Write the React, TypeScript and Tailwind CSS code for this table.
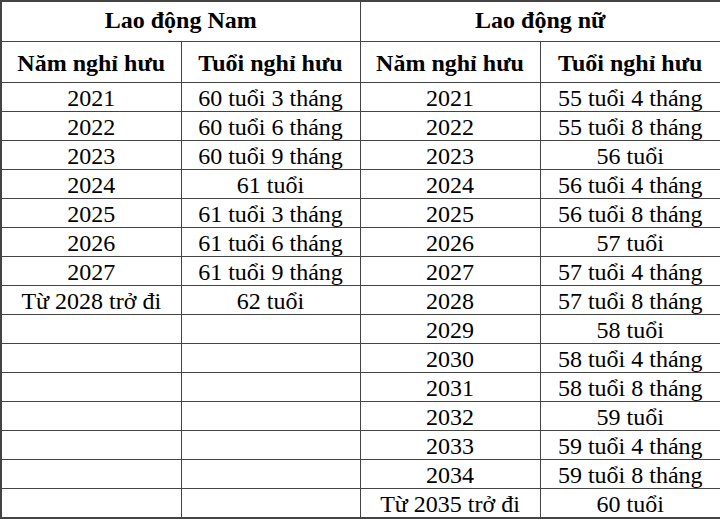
import React from "react";

const male: [string, string][] = [
  ["2021", "60 tuổi 3 tháng"],
  ["2022", "60 tuổi 6 tháng"],
  ["2023", "60 tuổi 9 tháng"],
  ["2024", "61 tuổi"],
  ["2025", "61 tuổi 3 tháng"],
  ["2026", "61 tuổi 6 tháng"],
  ["2027", "61 tuổi 9 tháng"],
  ["Từ 2028 trở đi", "62 tuổi"],
];

const female: [string, string][] = [
  ["2021", "55 tuổi 4 tháng"],
  ["2022", "55 tuổi 8 tháng"],
  ["2023", "56 tuổi"],
  ["2024", "56 tuổi 4 tháng"],
  ["2025", "56 tuổi 8 tháng"],
  ["2026", "57 tuổi"],
  ["2027", "57 tuổi 4 tháng"],
  ["2028", "57 tuổi 8 tháng"],
  ["2029", "58 tuổi"],
  ["2030", "58 tuổi 4 tháng"],
  ["2031", "58 tuổi 8 tháng"],
  ["2032", "59 tuổi"],
  ["2033", "59 tuổi 4 tháng"],
  ["2034", "59 tuổi 8 tháng"],
  ["Từ 2035 trở đi", "60 tuổi"],
];

const serif = "font-['Liberation_Serif','Times_New_Roman',serif] text-[24px] text-black";

export default function App() {
  const td = `${serif} border border-[#444] text-center p-0 pt-[3px] leading-[25px] font-normal`;
  const th = `${serif} border border-[#444] text-center font-bold p-0`;

  return (
    <div className={`w-[720px] h-[519px] bg-white overflow-hidden ${serif}`}>
      <table className={`w-[720px] table-fixed border-collapse border-2 border-[#444] ${serif}`}>
        <colgroup>
          <col className="w-[180px]" />
          <col className="w-[179px]" />
          <col className="w-[180px]" />
          <col className="w-[181px]" />
        </colgroup>
        <thead>
          <tr className="h-[40px]">
            <th colSpan={2} className={`${th} pb-[2px]`}>
              Lao động Nam
            </th>
            <th colSpan={2} className={`${th} pb-[2px]`}>
              Lao động nữ
            </th>
          </tr>
          <tr className="h-[41px]">
            <th className={`${th} pt-[3px]`}>Năm nghỉ hưu</th>
            <th className={`${th} pt-[3px]`}>Tuổi nghỉ hưu</th>
            <th className={`${th} pt-[3px]`}>Năm nghỉ hưu</th>
            <th className={`${th} pt-[3px]`}>Tuổi nghỉ hưu</th>
          </tr>
        </thead>
        <tbody>
          {female.map((f, i) => (
            <tr key={f[0]} className="h-[29px]">
              <td className={td}>{male[i]?.[0] ?? ""}</td>
              <td className={td}>{male[i]?.[1] ?? ""}</td>
              <td className={td}>{f[0]}</td>
              <td className={td}>{f[1]}</td>
            </tr>
          ))}
        </tbody>
      </table>
    </div>
  );
}
